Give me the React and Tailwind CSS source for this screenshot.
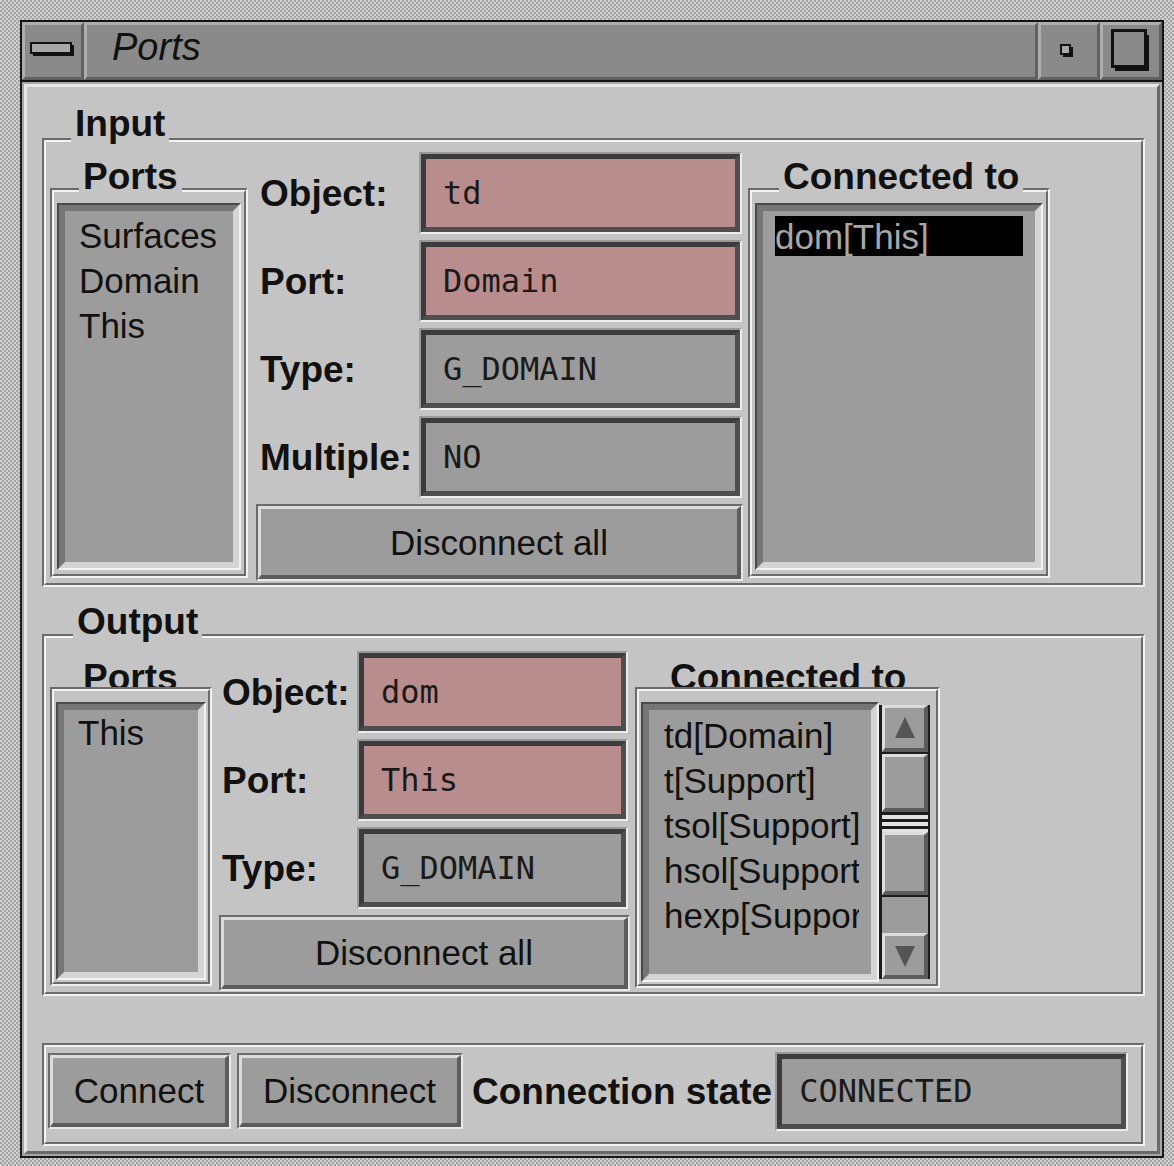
import React from "react";

// Motif-style bevels: light edge top/left, dark edge bottom/right
const raised =
  "border-t-[3px] border-l-[3px] border-b-[4px] border-r-[4px] border-t-[#dcdcdc] border-l-[#dcdcdc] border-b-[#5c5c5c] border-r-[#5c5c5c] bg-[#9c9c9c]";
const titleBevel =
  "border-[3px] border-t-[#aeaeae] border-l-[#aeaeae] border-b-[#606060] border-r-[#606060]";

function Etched({ className = "", inner = "", children }) {
  return (
    <div
      className={`flex flex-col border-2 border-t-[#6b6b6b] border-l-[#6b6b6b] border-b-[#f2f2f2] border-r-[#f2f2f2] ${className}`}
    >
      <div
        className={`flex-1 border-2 border-t-[#f2f2f2] border-l-[#f2f2f2] border-b-[#6b6b6b] border-r-[#6b6b6b] ${inner}`}
      >
        {children}
      </div>
    </div>
  );
}

// frame whose title breaks the top line
function Group({ title, titleClass = "", className = "", inner = "", children }) {
  return (
    <div className={`relative flex flex-col ${className}`}>
      <Etched className="flex-1" inner={inner}>
        {children}
      </Etched>
      <span
        className={`absolute top-0 bg-[#c4c4c4] px-[4px] pb-[4px] text-[37px] font-bold leading-[37px] ${titleClass}`}
      >
        {title}
      </span>
    </div>
  );
}

// frame whose title sits above the line and gets cut by it
function ClipGroup({ title, titleClass = "", className = "", inner = "", children }) {
  return (
    <div className={`flex flex-col ${className}`}>
      <div className="h-[32px] shrink-0 overflow-hidden">
        <div className={`whitespace-nowrap pt-[4px] text-[37px] font-bold leading-[37px] ${titleClass}`}>{title}</div>
      </div>
      <Etched className="flex-1" inner={inner}>
        {children}
      </Etched>
    </div>
  );
}

function ListBox({ className = "", children }) {
  return (
    <div
      className={`flex flex-col border-2 border-t-[#4a4a4a] border-l-[#4a4a4a] border-b-[#f2f2f2] border-r-[#f2f2f2] ${className}`}
    >
      <div className="flex-1 border-[6px] border-t-[#767676] border-l-[#767676] border-b-[#d4d4d4] border-r-[#d4d4d4] bg-[#9c9c9c]">
        {children}
      </div>
    </div>
  );
}

function Field({ value, pink = false, className = "" }) {
  return (
    <div
      className={`border-2 border-t-[#9a9a9a] border-l-[#9a9a9a] border-b-[#ececec] border-r-[#ececec] ${className}`}
    >
      <div
        className={`flex h-full items-center border-[5px] border-t-[#3c3c3c] border-l-[#3c3c3c] border-b-[#4e4e4e] border-r-[#4e4e4e] pl-[17px] ${
          pink ? "bg-[#b98d8d]" : "bg-[#9c9c9c]"
        }`}
      >
        <span className="font-['DejaVu_Sans_Mono',monospace] text-[32px] leading-none tracking-[0px] text-[#1a1a1a]">
          {value}
        </span>
      </div>
    </div>
  );
}

function Button({ children, className = "" }) {
  return (
    <div
      className={`border-2 border-t-[#6c6c6c] border-l-[#6c6c6c] border-b-[#e8e8e8] border-r-[#e8e8e8] ${className}`}
    >
      <div
        className={`flex h-full items-center justify-center text-[35px] leading-none ${raised}`}
      >
        {children}
      </div>
    </div>
  );
}

function Row({ label, value, pink, labelW, fieldW, labelPad }) {
  return (
    <div className="flex h-[82px] items-center">
      <span className={`${labelW} ${labelPad} text-[37px] font-bold leading-none`}>{label}</span>
      <Field value={value} pink={pink} className={`${fieldW} h-full`} />
    </div>
  );
}

function Arrow({ down = false }) {
  return (
    <div className={`flex h-full items-center justify-center ${raised}`}>
      <svg width="22" height="24" viewBox="0 0 22 24">
        {down ? (
          <polygon points="1,2 21,2 11,23" fill="#555" />
        ) : (
          <polygon points="11,1 21,22 1,22" fill="#555" />
        )}
      </svg>
    </div>
  );
}

function ScrollBar() {
  return (
    <div className="my-[3px] flex w-[51px] flex-col border-l-[3px] border-r-2 border-[#1c1c1c] bg-[#9c9c9c]">
      <div className="h-[49px] border-b-2 border-[#1c1c1c]">
        <Arrow />
      </div>
      <div className="flex h-[143px] flex-col border-b-2 border-[#1c1c1c]">
        <div className={`h-[58px] ${raised}`} />
        <div className="h-[3px] bg-[#1c1c1c]" />
        <div className="h-[4px] bg-[#e2e2e2]" />
        <div className="h-[3px] bg-[#1c1c1c]" />
        <div className="h-[4px] bg-[#e2e2e2]" />
        <div className="h-[3px] bg-[#1c1c1c]" />
        <div className="h-[3px] bg-[#e2e2e2]" />
        <div className={`flex-1 ${raised}`} />
      </div>
      <div className="flex-1" />
      <div className="h-[46px]">
        <Arrow down />
      </div>
    </div>
  );
}

function TitleBar() {
  return (
    <div className="flex h-[62px] shrink-0 border-2 border-[#141414] bg-[#8a8a8a]">
      <div className={`flex w-[62px] items-center justify-center pb-[2px] ${titleBevel}`}>
        <svg width="46" height="16" viewBox="0 0 46 16">
          <rect x="1" y="1" width="40" height="10" fill="#a8a8a8" stroke="#111" strokeWidth="2" />
          <rect x="3" y="11" width="40" height="3" fill="#111" />
          <rect x="41" y="3" width="3" height="11" fill="#111" />
        </svg>
      </div>
      <div className={`flex flex-1 items-center pb-[9px] pl-[25px] ${titleBevel}`}>
        <span className="text-[38px] italic leading-none">Ports</span>
      </div>
      <div className={`flex w-[62px] items-center justify-center pr-[4px] ${titleBevel}`}>
        <svg width="14" height="14" viewBox="0 0 14 14">
          <rect x="1" y="1" width="9" height="9" fill="#a8a8a8" stroke="#111" strokeWidth="2" />
          <rect x="3" y="10" width="9" height="3" fill="#111" />
          <rect x="10" y="3" width="3" height="10" fill="#111" />
        </svg>
      </div>
      <div className={`flex w-[62px] items-center justify-center ${titleBevel}`}>
        <svg width="40" height="44" viewBox="0 0 40 44">
          <rect x="4" y="6" width="34" height="36" fill="#111" />
          <rect x="1.5" y="1.5" width="33" height="36" fill="#8a8a8a" stroke="#111" strokeWidth="3" />
        </svg>
      </div>
    </div>
  );
}

export default function App() {
  const outputLinks = ["td[Domain]", "t[Support]", "tsol[Support]", "hsol[Support]", "hexp[Support]"];

  return (
    <div className="h-[1166px] w-[1174px] overflow-hidden bg-[image:repeating-conic-gradient(#a4a4a4_0%_25%,#d2d2d2_0%_50%)] bg-[length:4px_4px] pl-[20px] pt-[20px] font-['Liberation_Sans',Arial,sans-serif] text-[#111]">
      <div className="flex h-[1138px] w-[1144px] flex-col">
        <TitleBar />

        <div className="flex flex-1 flex-col border-x-2 border-b-2 border-[#1a1a1a] bg-[#a6a6a6] p-[2px]">
          <div className="flex flex-1 flex-col border-[3px] border-t-[#e6e6e6] border-l-[#e6e6e6] border-b-[#6a6a6a] border-r-[#6a6a6a] bg-[#c4c4c4]">
            {/* Input */}
            <Group
              title="Input"
              titleClass="left-[29px]"
              className="ml-[15px] mt-[18px] h-[482px] w-[1103px] pt-[33px]"
              inner="flex items-start"
            >
              <Group
                title="Ports"
                titleClass="left-[29px]"
                className="ml-[4px] mt-[16px] h-[420px] w-[198px] pt-[30px]"
                inner="flex flex-col px-[3px] pb-[4px] pt-[11px]"
              >
                <ListBox className="flex-1">
                  <div className="pl-[14px] pt-[2px] text-[35px] leading-[45px]">
                    <div>Surfaces</div>
                    <div>Domain</div>
                    <div>This</div>
                  </div>
                </ListBox>
              </Group>

              <div className="ml-[7px] mt-[10px] flex w-[490px] flex-col gap-[6px]">
                <Row label="Object:" value="td" pink labelW="w-[164px]" fieldW="w-[323px]" labelPad="pl-[5px]" />
                <Row label="Port:" value="Domain" pink labelW="w-[164px]" fieldW="w-[323px]" labelPad="pl-[5px]" />
                <Row label="Type:" value="G_DOMAIN" labelW="w-[164px]" fieldW="w-[323px]" labelPad="pl-[5px]" />
                <Row label="Multiple:" value="NO" labelW="w-[164px]" fieldW="w-[323px]" labelPad="pl-[5px]" />
                <Button className="ml-[1px] h-[77px] w-[487px]">Disconnect all</Button>
              </div>

              <Group
                title="Connected to"
                titleClass="left-[31px]"
                className="ml-[3px] mt-[16px] h-[420px] w-[302px] pt-[30px]"
                inner="flex flex-col px-[3px] pb-[4px] pt-[11px]"
              >
                <ListBox className="flex-1">
                  <div className="px-[12px] pt-[5px]">
                    <div className="flex h-[40px] items-center bg-black text-[35px] leading-none text-[#a8a8a8]">
                      dom[This]
                    </div>
                  </div>
                </ListBox>
              </Group>
            </Group>

            {/* Output */}
            <Group
              title="Output"
              titleClass="left-[31px]"
              className="ml-[15px] mt-[16px] h-[393px] w-[1103px] pt-[31px]"
              inner="flex items-start"
            >
              <ClipGroup
                title="Ports"
                titleClass="pl-[33px]"
                className="ml-[4px] mt-[17px] h-[331px] w-[162px]"
                inner="flex flex-col px-[2px] pb-[2px] pt-[11px]"
              >
                <ListBox className="flex-1">
                  <div className="pl-[14px] text-[35px] leading-[45px]">This</div>
                </ListBox>
              </ClipGroup>

              <div className="ml-[6px] mt-[13px] flex w-[414px] flex-col gap-[6px]">
                <Row label="Object:" value="dom" pink labelW="w-[139px]" fieldW="w-[271px]" labelPad="pl-[4px]" />
                <Row label="Port:" value="This" pink labelW="w-[139px]" fieldW="w-[271px]" labelPad="pl-[4px]" />
                <Row label="Type:" value="G_DOMAIN" labelW="w-[139px]" fieldW="w-[271px]" labelPad="pl-[4px]" />
                <Button className="ml-[1px] h-[76px] w-[411px]">Disconnect all</Button>
              </div>

              <ClipGroup
                title="Connected to"
                titleClass="pl-[35px]"
                className="ml-[3px] mt-[17px] h-[333px] w-[305px]"
                inner="flex px-[2px] pb-[2px] pt-[11px]"
              >
                <ListBox className="w-[238px]">
                  <div className="mr-[12px] overflow-hidden whitespace-nowrap pl-[15px] pt-[3px] text-[35px] leading-[45px]">
                    {outputLinks.map((l) => (
                      <div key={l}>{l}</div>
                    ))}
                  </div>
                </ListBox>
                <ScrollBar />
              </ClipGroup>
            </Group>

            {/* Connection bar */}
            <Etched
              className="ml-[15px] mt-[47px] h-[103px] w-[1103px]"
              inner="flex items-center pb-[7px] pl-[2px]"
            >
              <Button className="h-[76px] w-[183px]">Connect</Button>
              <Button className="ml-[6px] h-[76px] w-[226px]">Disconnect</Button>
              <span className="ml-[9px] whitespace-nowrap text-[37px] font-bold leading-none">Connection state</span>
              <Field value="CONNECTED" className="ml-[3px] h-[79px] w-[353px]" />
            </Etched>
          </div>
        </div>
      </div>
    </div>
  );
}
